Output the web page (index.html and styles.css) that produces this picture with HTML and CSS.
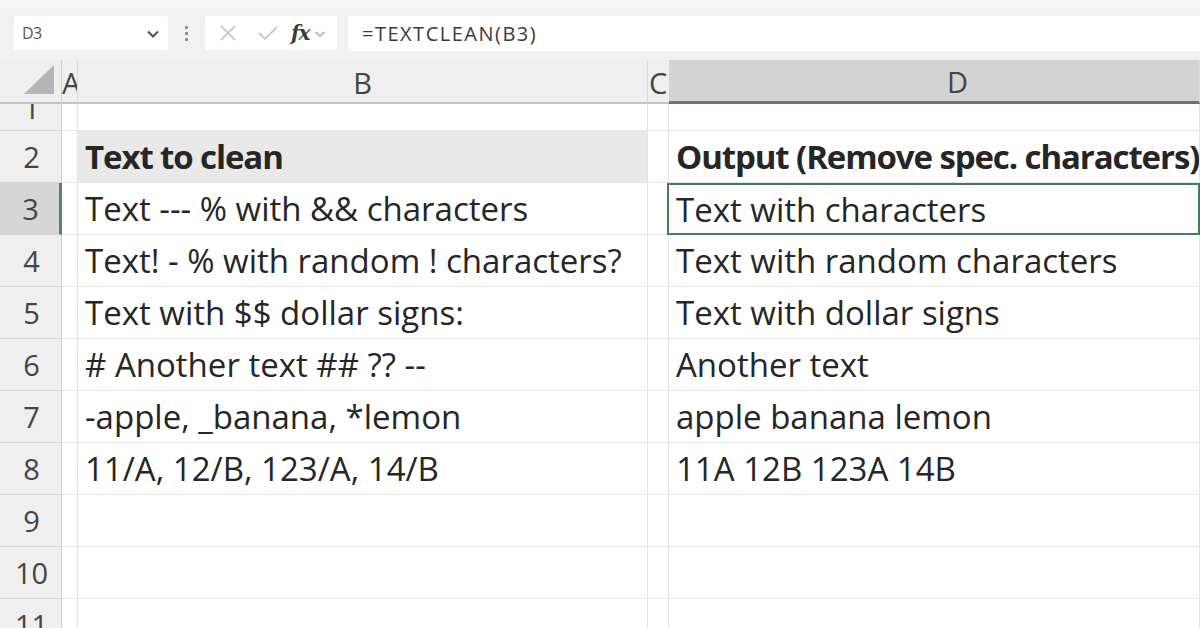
FILE: index.html
```html
<!DOCTYPE html>
<html>
<head>
<meta charset="utf-8">
<link rel="stylesheet" href="styles.css">
</head>
<body>
<div class="app">
  <div class="fbar">
    <div class="namebox">
      <span class="nb-text">D3</span>
      <svg class="nb-chev" width="14" height="10" viewBox="0 0 14 10"><path d="M2 2.5 L7 7.5 L12 2.5" fill="none" stroke="#555" stroke-width="2.2"/></svg>
    </div>
    <div class="dots"><span></span><span></span><span></span></div>
    <div class="fbtns">
      <svg class="ic-x" width="18" height="18" viewBox="0 0 18 18"><path d="M2 2 L16 16 M16 2 L2 16" stroke="#c9c9c9" stroke-width="1.8" fill="none"/></svg>
      <svg class="ic-ok" width="22" height="18" viewBox="0 0 22 18"><path d="M2 9 L8 15 L20 3" stroke="#c9c9c9" stroke-width="1.8" fill="none"/></svg>
      <span class="fx">fx</span>
      <svg class="fx-chev" width="12" height="8" viewBox="0 0 12 8"><path d="M1.5 2 L6 6 L10.5 2" fill="none" stroke="#aaa" stroke-width="1.4"/></svg>
    </div>
    <div class="formula">=TEXTCLEAN(B3)</div>
  </div>

  <div class="sheet">
    <div class="ch corner"><svg width="32" height="32" viewBox="0 0 32 32"><path d="M31 1 L31 30 L1 30 Z" fill="#b4b4b4"/></svg></div>
    <div class="ch colA"><span>A</span></div>
    <div class="ch">B</div>
    <div class="ch colC"><span>C</span></div>
    <div class="ch sel">D</div>

    <div class="rh r1"><span>1</span></div>
    <div class="c r1"></div><div class="c r1"></div><div class="c r1"></div><div class="c r1"></div>

    <div class="rh">2</div>
    <div class="c"></div><div class="c txt bold fill">Text to clean</div><div class="c"></div><div class="c txt bold">Output (Remove spec. characters)</div>

    <div class="rh rsel">3</div>
    <div class="c"></div><div class="c txt">Text --- % with &amp;&amp; characters</div><div class="c"></div><div class="c txt active">Text with characters</div>

    <div class="rh">4</div>
    <div class="c"></div><div class="c txt">Text! - % with random ! characters?</div><div class="c"></div><div class="c txt">Text with random characters</div>

    <div class="rh">5</div>
    <div class="c"></div><div class="c txt">Text with $$ dollar signs:</div><div class="c"></div><div class="c txt">Text with dollar signs</div>

    <div class="rh">6</div>
    <div class="c"></div><div class="c txt"># Another text ## ?? --</div><div class="c"></div><div class="c txt">Another text</div>

    <div class="rh">7</div>
    <div class="c"></div><div class="c txt">-apple, _banana, *lemon</div><div class="c"></div><div class="c txt">apple banana lemon</div>

    <div class="rh">8</div>
    <div class="c"></div><div class="c txt">11/A, 12/B, 123/A, 14/B</div><div class="c"></div><div class="c txt">11A 12B 123A 14B</div>

    <div class="rh">9</div>
    <div class="c"></div><div class="c"></div><div class="c"></div><div class="c"></div>

    <div class="rh">10</div>
    <div class="c"></div><div class="c"></div><div class="c"></div><div class="c"></div>

    <div class="rh">11</div>
    <div class="c"></div><div class="c"></div><div class="c"></div><div class="c"></div>
  </div>
</div>
</body>
</html>
```

FILE: styles.css
```css
* { box-sizing: border-box; }
html, body { margin: 0; padding: 0; }
body {
  width: 1200px;
  height: 628px;
  overflow: hidden;
  background: #ffffff;
  font-family: "Open Sans", "Noto Sans", sans-serif;
  color: #252525;
}
.app { width: 1200px; height: 628px; overflow: hidden; display: flex; flex-direction: column; }

/* formula bar */
.fbar {
  height: 60px;
  flex: none;
  background: #f1f1f1;
  border-top: 8px solid #f6f6f6;
  display: flex;
  align-items: center;
  padding: 0 0 0 14px;
}
.namebox {
  width: 154px;
  height: 34px;
  background: #ffffff;
  border-radius: 3px;
  display: flex;
  align-items: center;
  justify-content: space-between;
  padding: 0 8px 0 8px;
  margin-top: -2px;
}
.nb-text { font-size: 16px; color: #555; letter-spacing: -0.5px; }
.nb-chev { margin-top: 2px; }
.dots {
  width: 37px;
  display: flex;
  flex-direction: column;
  align-items: center;
  gap: 3px;
  margin-top: -2px;
}
.dots span { width: 3px; height: 3px; background: #8a8a8a; border-radius: 1px; }
.fbtns {
  width: 132px;
  height: 34px;
  background: #ffffff;
  border-radius: 3px;
  display: flex;
  align-items: center;
  padding-left: 14px;
  margin-top: -2px;
}
.ic-x { margin-right: 20px; }
.ic-ok { margin-right: 12px; }
.fx {
  font-family: "DejaVu Serif", "Liberation Serif", serif;
  font-style: italic;
  font-weight: bold;
  font-size: 20px;
  color: #3c3c3c;
  letter-spacing: -1px;
  margin-right: 4px;
}
.fx-chev { margin-top: 2px; }
.formula {
  flex: 1;
  height: 35px;
  margin-left: 11px;
  margin-top: -2px;
  background: #ffffff;
  display: flex;
  align-items: center;
  padding-left: 14px;
  font-size: 20px;
  color: #3a3a3a;
  letter-spacing: 1.5px;
}

/* sheet grid */
.sheet {
  display: grid;
  grid-template-columns: 62px 16px 570px 21px 531px;
  grid-template-rows: 44px 27px repeat(10, 52px);
  flex: none;
}
.ch {
  background: #efefef;
  border-bottom: 2px solid #c4c4c4;
  border-right: 1px solid #dcdcdc;
  display: flex;
  align-items: center;
  justify-content: center;
  font-size: 29px;
  color: #444;
  padding-top: 2px;
}
.corner { justify-content: flex-end; align-items: flex-end; padding: 0 6px 6px 0; border-right: 1px solid #cfcfcf; }
.colA { overflow: hidden; justify-content: flex-start; }
.colA span { margin-left: 0px; }
.colC { overflow: hidden; justify-content: flex-start; border-right: none; }
.colC span { margin-left: 1px; }
.ch.sel {
  background: #d3d3d3;
  border-bottom: 3px solid #5d7b67;
  justify-content: flex-start;
  padding-left: 278px;
}

.rh {
  background: #efefef;
  border-right: 1px solid #cfcfcf;
  border-bottom: 1px solid #d6d6d6;
  display: flex;
  align-items: center;
  justify-content: center;
  font-size: 29px;
  color: #444;
  padding-left: 2px;
}
.rh.r1 { overflow: hidden; align-items: flex-end; }
.rh.r1 span { line-height: 52px; margin-bottom: -4px; }
.rh.rsel { background: #d6d6d6; border-right: 3px solid #4e8a63; }

.c {
  border-right: 1px solid #e4e4e4;
  border-bottom: 1px solid #e6e6e6;
  background: #ffffff;
}
.txt {
  display: flex;
  align-items: center;
  padding-left: 7px;
  font-size: 33px;
  white-space: nowrap;
  overflow: hidden;
  color: #262626;
  letter-spacing: 0px;
}
.bold { font-weight: 700; letter-spacing: -1.1px; }
.fill { background: #e9e9e9; }
.active {
  border: 2px solid #3f7f56;
  padding-left: 7px;
  margin-left: -2px;
}
```
